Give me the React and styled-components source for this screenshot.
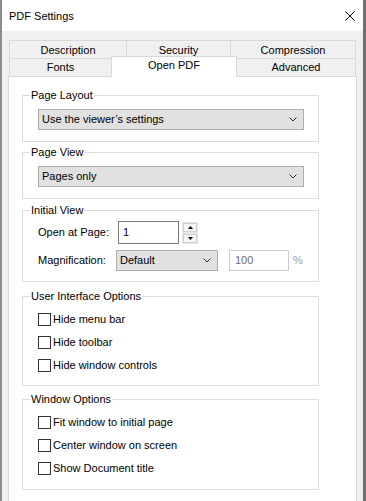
import React from "react";
import styled, { createGlobalStyle } from "styled-components";

const GlobalStyle = createGlobalStyle`
  html, body { margin: 0; padding: 0; }
  body {
    font-family: "Liberation Sans", Arial, sans-serif;
    font-size: 11px;
    color: #000;
    background: #f0f0f0;
  }
  * { box-sizing: border-box; }
`;

const Window = styled.div`
  width: 366px;
  height: 501px;
  overflow: hidden;
  display: flex;
  flex-direction: column;
  background: #f0f0f0;
  border-left: 2px solid #8c8c8c;
  border-right: 3px solid #707070;
`;

const TitleBar = styled.div`
  height: 31px;
  flex-shrink: 0;
  background: #fff;
  display: flex;
  align-items: center;
  justify-content: space-between;
  padding: 1px 8px 0 7px;
`;

const Title = styled.span`
  font-size: 11px;
  line-height: 13px;
`;

const CloseIcon = styled.svg`
  width: 10px;
  height: 10px;
  display: block;
`;

const Body = styled.div`
  padding: 9px 0 0 6px;
  display: flex;
  flex-direction: column;
`;

const TabRow = styled.div`
  display: flex;
  height: 18px;
  margin-left: 1px;
`;

const Tab = styled.div`
  width: ${(p) => p.$w}px;
  height: ${(p) => (p.$active ? 21 : 18)}px;
  margin-top: ${(p) => (p.$active ? -2 : 0)}px;
  margin-left: ${(p) => (p.$first ? 0 : -1)}px;
  border: 1px solid #d9d9d9;
  border-bottom: none;
  background: ${(p) => (p.$active ? "#fff" : "#f0f0f0")};
  position: ${(p) => (p.$active ? "relative" : "static")};
  z-index: ${(p) => (p.$active ? 1 : "auto")};
  display: flex;
  align-items: center;
  justify-content: center;
  line-height: 13px;
  padding-top: ${(p) => (p.$top ? 2 : 0)}px;
  padding-bottom: ${(p) => (p.$active ? 3 : 0)}px;
  flex-shrink: 0;
`;

const Panel = styled.div`
  width: 349px;
  height: 440px;
  flex-shrink: 0;
  border: 1px solid #d9d9d9;
  background: #fff;
  padding: 18px 0 0 13px;
`;

const Group = styled.div`
  position: relative;
  width: 297px;
  border: 1px solid #dcdcdc;
  margin-top: ${(p) => p.$mt || 0}px;
  padding: ${(p) => p.$pad};
  display: flex;
  flex-direction: column;
`;

const Legend = styled.span`
  position: absolute;
  top: -7px;
  left: 7px;
  padding: 0 1px;
  background: #fff;
  line-height: 13px;
`;

const Select = styled.div`
  width: ${(p) => p.$w}px;
  height: 21px;
  border: 1px solid #adadad;
  background: #e1e1e1;
  display: flex;
  align-items: center;
  justify-content: space-between;
  padding: 0 6px 0 3px;
  line-height: 13px;
  flex-shrink: 0;
`;

const Chevron = styled.svg`
  width: 8px;
  height: 5px;
  display: block;
`;

const FieldRow = styled.div`
  display: flex;
  align-items: center;
  height: ${(p) => p.$h}px;
  margin-top: ${(p) => p.$mt || 0}px;
`;

const FieldLabel = styled.span`
  width: ${(p) => p.$w}px;
  flex-shrink: 0;
  line-height: 13px;
`;

const TextInput = styled.div`
  width: ${(p) => p.$w}px;
  height: ${(p) => p.$h}px;
  flex-shrink: 0;
  border: 1px solid ${(p) => (p.$disabled ? "#cccccc" : "#7a7a7a")};
  background: #fff;
  color: ${(p) => (p.$disabled ? "#6d6d6d" : "#000")};
  display: flex;
  align-items: center;
  padding-left: ${(p) => (p.$disabled ? 5 : 4)}px;
  margin-left: ${(p) => p.$ml || 0}px;
  line-height: 13px;
`;

const Spinner = styled.div`
  width: 16px;
  height: 22px;
  margin-left: 3px;
  align-self: flex-end;
  background: #e6e6e6;
  padding: 1px;
  display: flex;
  flex-direction: column;
  gap: 2px;
`;

const SpinButton = styled.div`
  flex: 1;
  background: #f6f6f6;
  border: 1px solid #d0d0d0;
  display: flex;
  align-items: center;
  justify-content: center;
`;

const Arrow = styled.svg`
  width: 5px;
  height: 3px;
  display: block;
`;

const Unit = styled.span`
  margin-left: 4px;
  color: #a0a0a0;
  line-height: 13px;
`;

const CheckRow = styled.label`
  display: flex;
  align-items: center;
  height: 23px;
`;

const Box = styled.span`
  width: 13px;
  height: 13px;
  flex-shrink: 0;
  border: 1px solid #333;
  background: #fff;
  margin-right: 2px;
`;

const CheckText = styled.span`
  line-height: 13px;
`;

const ChevronDown = () => (
  <Chevron viewBox="0 0 8 5">
    <polyline points="0.5,0.5 4,4 7.5,0.5" fill="none" stroke="#333" strokeWidth="1" />
  </Chevron>
);

const Check = ({ children }) => (
  <CheckRow>
    <Box />
    <CheckText>{children}</CheckText>
  </CheckRow>
);

export default function App() {
  return (
    <>
      <GlobalStyle />
      <Window>
        <TitleBar>
          <Title>PDF Settings</Title>
          <CloseIcon viewBox="0 0 10 10">
            <path d="M0.5 0.5 L9.5 9.5 M9.5 0.5 L0.5 9.5" stroke="#000" strokeWidth="1" fill="none" />
          </CloseIcon>
        </TitleBar>
        <Body>
          <TabRow>
            <Tab $w={118} $first $top>Description</Tab>
            <Tab $w={105} $top>Security</Tab>
            <Tab $w={126} $top>Compression</Tab>
          </TabRow>
          <TabRow>
            <Tab $w={103} $first>Fonts</Tab>
            <Tab $w={126} $active>Open PDF</Tab>
            <Tab $w={120}>Advanced</Tab>
          </TabRow>
          <Panel>
            <Group $pad="13px 14px 11px 15px">
              <Legend>Page Layout</Legend>
              <Select $w={266}>
                <span>Use the viewer’s settings</span>
                <ChevronDown />
              </Select>
            </Group>
            <Group $mt={10} $pad="13px 14px 11px 15px">
              <Legend>Page View</Legend>
              <Select $w={266}>
                <span>Pages only</span>
                <ChevronDown />
              </Select>
            </Group>
            <Group $mt={11} $pad="10px 0 10px 15px">
              <Legend>Initial View</Legend>
              <FieldRow $h={23}>
                <FieldLabel $w={80}>Open at Page:</FieldLabel>
                <TextInput $w={61} $h={23}>1</TextInput>
                <Spinner>
                  <SpinButton>
                    <Arrow viewBox="0 0 5 3">
                      <polygon points="2.5,0 5,3 0,3" fill="#000" />
                    </Arrow>
                  </SpinButton>
                  <SpinButton>
                    <Arrow viewBox="0 0 5 3">
                      <polygon points="0,0 5,0 2.5,3" fill="#000" />
                    </Arrow>
                  </SpinButton>
                </Spinner>
              </FieldRow>
              <FieldRow $h={21} $mt={6}>
                <FieldLabel $w={78}>Magnification:</FieldLabel>
                <Select $w={102}>
                  <span>Default</span>
                  <ChevronDown />
                </Select>
                <TextInput $w={60} $h={21} $ml={11} $disabled>100</TextInput>
                <Unit>%</Unit>
              </FieldRow>
            </Group>
            <Group $mt={14} $pad="11px 0 8px 15px">
              <Legend>User Interface Options</Legend>
              <Check>Hide menu bar</Check>
              <Check>Hide toolbar</Check>
              <Check>Hide window controls</Check>
            </Group>
            <Group $mt={13} $pad="11px 0 9px 15px">
              <Legend>Window Options</Legend>
              <Check>Fit window to initial page</Check>
              <Check>Center window on screen</Check>
              <Check>Show Document title</Check>
            </Group>
          </Panel>
        </Body>
      </Window>
    </>
  );
}
